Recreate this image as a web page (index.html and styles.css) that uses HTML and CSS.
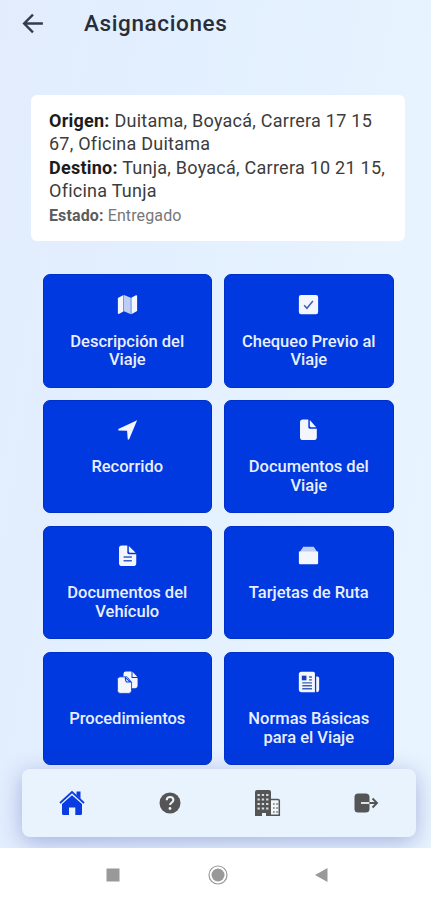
FILE: index.html
```html
<!DOCTYPE html>
<html lang="es">
<head>
<meta charset="utf-8">
<meta name="viewport" content="width=device-width, initial-scale=1">
<title>Asignaciones</title>
<link rel="stylesheet" href="styles.css">
</head>
<body>
<div class="screen">
  <header class="topbar">
    <svg class="back" viewBox="0 0 24 24"><path d="M21 12H3M11.5 3.500 3 12l8.500 8.500"/></svg>
    <h1>Asignaciones</h1>
  </header>
  <section class="card">
    <p class="origin"><b>Origen:</b> Duitama, Boyacá, Carrera 17 15<br>67, Oficina Duitama</p>
    <p class="destination"><b>Destino:</b> Tunja, Boyacá, Carrera 10 21 15,<br>Oficina Tunja</p>
    <p class="status"><b>Estado:</b> Entregado</p>
  </section>
  <main class="grid">
    <div class="tile">
      <svg viewBox="0 0 24 24"><path d="M1 4.500 7.400 1v19l-5.400 2.900Q1 23 1 22z"/><path class="shade" d="m8 1 7.800 3.200V23L8 19.800z"/><path d="m16.400 4.200 5.200-2.800Q23 1 23 2.400v17l-6.600 3.600z"/></svg>
      <span>Descripción del<br>Viaje</span>
    </div>
    <div class="tile">
      <svg viewBox="0 0 24 24"><rect x="1" y="1" width="22" height="22" rx="2.500"/><path class="cut" d="m7 12.800 3.200 3.500L17 8"/></svg>
      <span>Chequeo Previo al<br>Viaje</span>
    </div>
    <div class="tile">
      <svg viewBox="0 0 24 24"><path d="M23 1.500 1.500 11.300v1.900l10 .1.800 10h1.500z"/></svg>
      <span>Recorrido</span>
    </div>
    <div class="tile">
      <svg viewBox="0 0 24 24"><path d="M5.500.5h6.300v8.800q0 1.700 1.700 1.700H21.500v9.800q0 3.200-3.200 3.200H5.500q-3.200 0-3.200-3.200V3.700Q2.300.5 5.500.5z"/><path d="M13.500 1v7q0 1.300 1.300 1.300h6z"/></svg>
      <span>Documentos del<br>Viaje</span>
    </div>
    <div class="tile">
      <svg viewBox="0 0 24 24"><path d="M5.500.5h6.300v8.300q0 1.700 1.700 1.700H22v10.300q0 3.200-3.200 3.200H5.500q-3.200 0-3.200-3.200V3.700Q2.300.5 5.500.5z"/><path d="M13.500 1v6.500q0 1.300 1.300 1.300h6.500z"/><path class="cut" d="M7.500 13.600h9.500M7.500 18h9.500"/></svg>
      <span>Documentos del<br>Vehículo</span>
    </div>
    <div class="tile">
      <svg viewBox="0 0 24 24"><path class="shade" d="M6 2h12L22 8H2z"/><path d="M1 7.500h22v13q0 1.500-1.500 1.500h-19Q1 22 1 20.500z"/></svg>
      <span>Tarjetas de Ruta</span>
    </div>
    <div class="tile">
      <svg class="copies" viewBox="0 0 26 28"><path d="M11 .5h7v8h7.500V18q0 3-3 3H8V3.500q0-3 3-3zM19.200.8l6 6.500h-6z"/><path class="outlined" d="M4 7h8.500l5.500 6.500V24q0 3.500-3.500 3.500H4Q.5 27.500.5 24V10.500Q.5 7 4 7z"/><path class="fold" d="M10.300 8q0 5.500 3 5.500h3.500z"/></svg>
      <span>Procedimientos</span>
    </div>
    <div class="tile">
      <svg class="news" viewBox="0 0 26 26"><path d="M4 1h14q2 0 2 2v22H4q-3 0-3-3V4q0-3 3-3z"/><path d="M21.500 6.500H23q2 0 2 2V22q0 3-2.500 3-1 0-1-2z"/><path class="cut" d="M13 7h3.500M13 10.500h3.500M5 14h11.500M5 17.500h11.500M5 21h11.500"/><path class="blue" d="M4.500 5.500H10V11H4.500z"/></svg>
      <span>Normas Básicas<br>para el Viaje</span>
    </div>
  </main>
  <nav class="tabs">
    <svg class="home" viewBox="0 0 26 26"><path d="M17.500 1.500h4V9l-4-4z"/><path d="M3 14 13 5.200 23 14v9.500q0 1.500-1.500 1.500h-5.200v-7.500H10V25H4.500Q3 25 3 23.500z"/><path class="roof" d="M1 13 13 2l12 11"/></svg>
    <svg viewBox="0 0 26 26"><circle cx="13" cy="13" r="10.500"/><path class="mark" d="M9.700 10.200C9.800 8 11 7 13 7s3.400 1.200 3.400 3c0 2.500-3.300 2.500-3.300 5"/><circle class="dot" cx="13" cy="18.500" r="1.400"/></svg>
    <svg viewBox="0 0 26 26"><path d="M2 0h12q2 0 2 2v24h-5v-3H7v3H0V2Q0 0 2 0z"/><path class="windows" d="M2.500 5h11.500M2.500 9.500h11.500M2.500 14h11.500M2.500 18.500h11.500"/><path class="annex" d="M16 9.500h7q1.300 0 1.300 1.300v14.400H16"/><path class="panes" d="M18 14h5M18 18h5M18 22h5"/></svg>
    <svg viewBox="0 0 26 26"><path d="M5 3.500h7.500q4 0 4 3.500v12q0 3.500-4 3.500H5q-3.500 0-3.500-3.500V7Q1.500 3.500 5 3.500z"/><path class="mark slim" d="M8 13h8.500"/><path class="arrow" d="M16.500 13h7M19.500 8.500 24 13l-4.500 4.500"/></svg>
  </nav>
</div>
<footer class="system">
  <svg viewBox="0 0 20 20"><rect x="3.500" y="3.500" width="13" height="13"/></svg>
  <svg viewBox="0 0 20 20"><circle class="ring" cx="10" cy="10" r="9"/><circle cx="10" cy="10" r="6.500"/></svg>
  <svg viewBox="0 0 20 20"><path d="M3 10 15.500 3v14z"/></svg>
</footer>
</body>
</html>
```
FILE: styles.css
```css
* { box-sizing: border-box; }
body { margin: 0; width: 431px; height: 900px; overflow: hidden; background: #fff; font-family: Roboto, sans-serif; }
h1, p { margin: 0; }
svg { display: block; }
.screen {
  height: 848px; overflow: hidden;
  background: linear-gradient(100deg, #e3ecfd 0%, #e2effe 30%, #e7f3fe 75%, #e8f4fe 100%);
}
.topbar { display: flex; align-items: center; height: 46px; padding-left: 20.500px; }
.back { width: 25px; height: 25px; fill: none; stroke: #343c4b; stroke-width: 2.300; }
h1 { margin-left: 38.500px; font-size: 22.500px; line-height: 26px; font-weight: 500; letter-spacing: .62px; color: #262e3a; }
.card {
  width: 374px; height: 146px; margin: 49px 0 0 31px; padding: 15px 0 0 18px;
  background: #fff; border-radius: 6px; white-space: nowrap;
  font-size: 18px; line-height: 22.500px; letter-spacing: .25px; color: #3c3c3c;
}
.card b { font-weight: 700; color: #1c1c1c; }
.card .destination { margin-top: 2px; }
.card .status { margin-top: 4px; font-size: 16px; line-height: 20px; color: #777; letter-spacing: .12px; }
.card .status b { color: #5c5c5c; }
.grid {
  display: grid; grid-template-columns: 169.500px 169.500px; grid-auto-rows: 113.500px;
  gap: 12.400px 12px; margin: 33px 0 0 42.500px;
}
.tile {
  display: flex; flex-direction: column; align-items: center;
  padding-top: 19px; background: #0039df; border: 1px solid #0030cc; border-radius: 7px;
  color: #e9effe; fill: #f3f6fd; font-size: 16.500px; line-height: 18.900px;
  font-weight: 500; letter-spacing: 0; text-align: center; white-space: nowrap;
}
.tile svg { width: 21px; height: 21px; margin: -.5px 0 18px; overflow: visible; }
.tile .copies { width: 21px; height: 23px; margin: -1px 0 16.500px; }
.tile .news { width: 22px; height: 22px; margin: -.5px 0 17px; }
.shade { fill: #bdcdf4; }
.cut { fill: none; stroke: #3c5fbe; stroke-width: 1.700; }
.blue { fill: #173fb4; }
.outlined { stroke: #0039df; stroke-width: 1; }
.fold { fill: none; stroke: #0039df; stroke-width: 1.300; }
.tabs {
  position: relative; display: grid; grid-template-columns: repeat(4, 98px); justify-items: center; align-items: center;
  width: 394px; height: 68px; margin: 4.300px 0 0 22px; padding-left: 1px;
  background: #e8f3fe; border-radius: 8px; fill: #555;
  box-shadow: 0 5px 22px rgba(55, 65, 165, .36);
}
.tabs svg { width: 26px; height: 26px; }
.tabs .home { fill: #0a3ce2; }
.roof { fill: none; stroke: #0a3ce2; stroke-width: 1.700; }
.mark { fill: none; stroke: #edf3f9; stroke-width: 2; }
.slim { stroke-width: 1.800; }
.dot { fill: #edf3f9; }
.windows { stroke: #d5dde5; stroke-width: 2; stroke-dasharray: 2.300 2; }
.annex { fill: #f1f6fb; stroke: #555; stroke-width: 1.500; }
.panes { stroke: #777; stroke-width: 1.700; stroke-dasharray: 1.700 1.500; }
.arrow { fill: none; stroke: #555; stroke-width: 1.900; }
.system { display: flex; align-items: center; gap: 84.500px; height: 53px; padding-left: 103px; fill: #999; }
.system svg { width: 20px; height: 20px; }
.ring { fill: none; stroke: #999; stroke-width: 1.200; }
```
